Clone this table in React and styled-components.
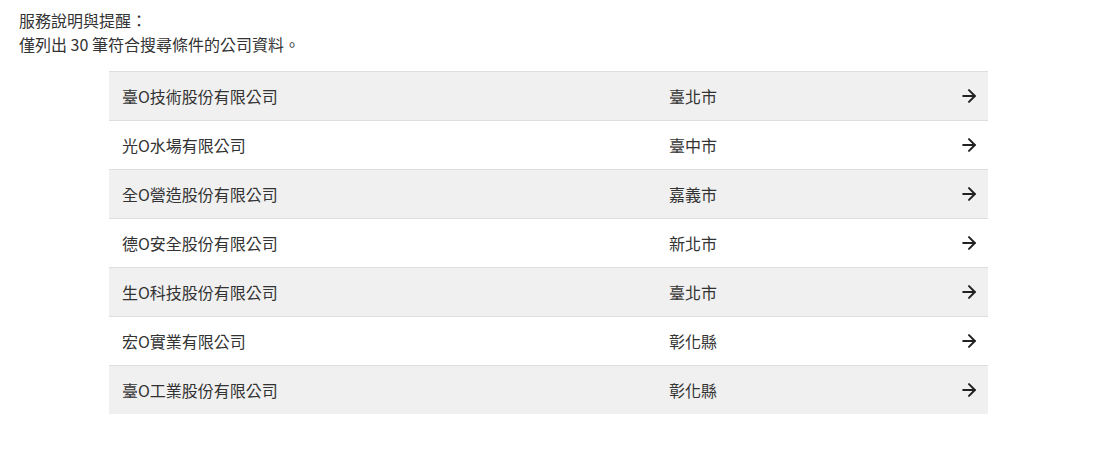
import React from "react";
import styled, { createGlobalStyle } from "styled-components";
import { ArrowRight } from "lucide-react";

const companies = [
  { name: "臺O技術股份有限公司", city: "臺北市" },
  { name: "光O水場有限公司", city: "臺中市" },
  { name: "全O營造股份有限公司", city: "嘉義市" },
  { name: "德O安全股份有限公司", city: "新北市" },
  { name: "生O科技股份有限公司", city: "臺北市" },
  { name: "宏O實業有限公司", city: "彰化縣" },
  { name: "臺O工業股份有限公司", city: "彰化縣" },
];

function App() {
  return (
    <>
      <GlobalStyle />
      <Page>
        <Notice>
          服務說明與提醒：
          <br />
          僅列出 30 筆符合搜尋條件的公司資料。
        </Notice>
        <List>
          {companies.map((c, i) => (
            <Row key={i} $striped={i % 2 === 0}>
              <Name>{c.name}</Name>
              <City>{c.city}</City>
              <Go>
                <ArrowRight size={20} strokeWidth={2.4} />
              </Go>
            </Row>
          ))}
        </List>
      </Page>
    </>
  );
}

export default App;

const GlobalStyle = createGlobalStyle`
  body {
    margin: 8px;
    background: #fff;
    font-family: "Noto Sans CJK TC", "Noto Sans", sans-serif;
    color: #333;
  }
`;

const Page = styled.div`
  padding: 0 11px;
`;

const Notice = styled.div`
  font-size: 16px;
  line-height: 24px;
  color: #333;
`;

const List = styled.div`
  margin: 15px 0 0 90px;
  width: 879px;
`;

const Row = styled.div`
  display: grid;
  grid-template-columns: 547px 1fr 40px;
  align-items: center;
  height: 48px;
  border-top: 1px solid #dedee0;
  background: ${(p) => (p.$striped ? "#f0f0f0" : "#fff")};
  font-size: 16px;
`;

const Name = styled.div`
  padding-left: 13px;
`;

const City = styled.div`
  padding-left: 13px;
`;

const Go = styled.div`
  display: flex;
  justify-content: flex-end;
  padding-right: 9px;
  color: #222;
`;
